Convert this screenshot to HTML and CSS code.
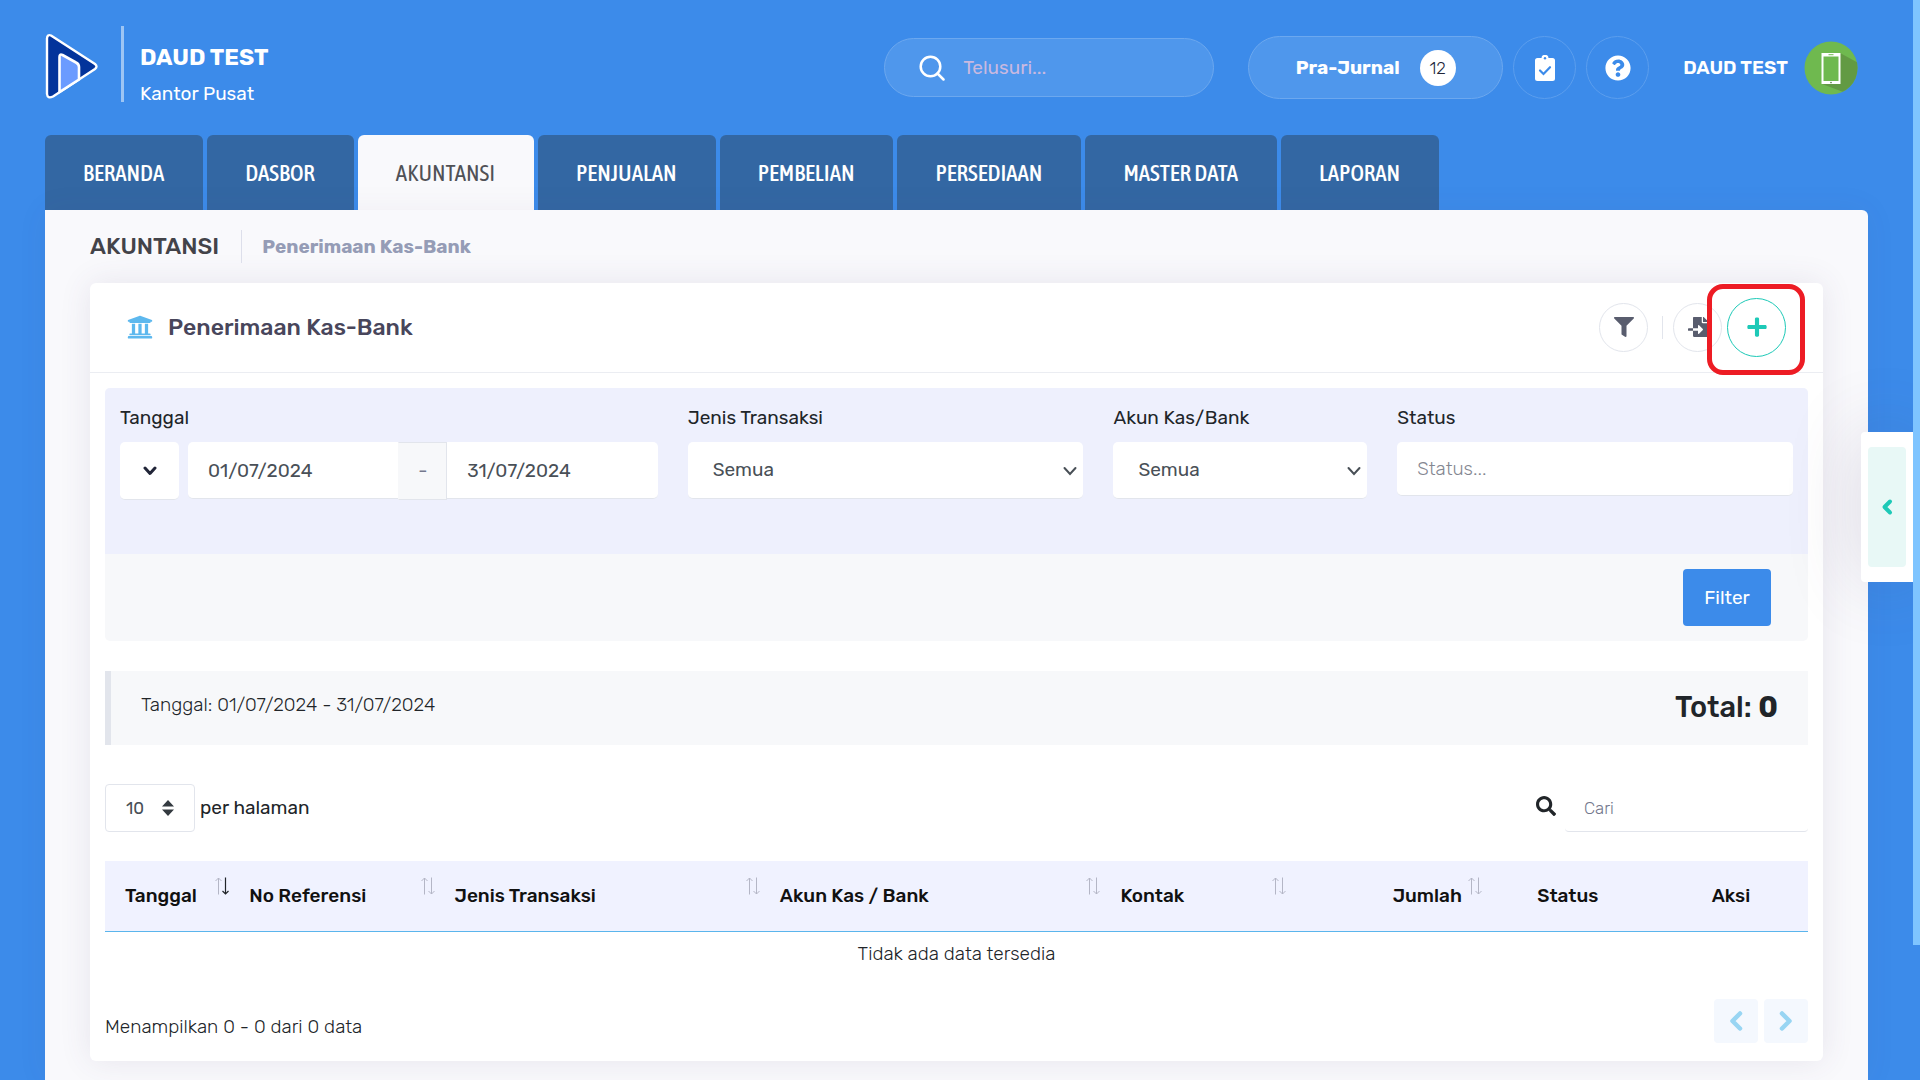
FILE: index.html
```html
<!DOCTYPE html>
<html lang="id">
<head>
<meta charset="utf-8">
<meta name="viewport" content="width=device-width, initial-scale=1">
<title>Penerimaan Kas-Bank</title>
<link rel="stylesheet" href="styles.css">
</head>
<body>
<header class="topbar">
  <a class="logo" href="#" aria-label="Beranda">
    <svg width="53" height="66" viewBox="0 0 53 66">
      <path d="M2 5.500Q2.300 1 6 2.500L50 31Q53 33.500 50 36L8 63.500Q2.500 66 2 61Z" fill="#03349b" stroke="#fff" stroke-width="2.400" stroke-linejoin="round"/>
      <path d="M14.500 59V24Q14.500 20.500 17.500 22L31 29.500Q34 31 34 34V46.500Z" fill="#6b9bff" stroke="#fff" stroke-width="2.600" stroke-linejoin="round"/>
    </svg>
  </a>
  <div class="company">
    <strong class="company-name">DAUD TEST</strong>
    <span class="company-branch">Kantor Pusat</span>
  </div>
  <label class="quick-search">
    <svg width="26" height="26" viewBox="0 0 26 26" fill="none" stroke="#fff" stroke-width="2.500" stroke-linecap="round"><circle cx="11.500" cy="11.500" r="9.800"/><path d="M18.500 18.500L24.500 24.500"/></svg>
    <input type="text" placeholder="Telusuri..." aria-label="Telusuri">
  </label>
  <button class="journal-pill" type="button">Pra-Jurnal <span class="count">12</span></button>
  <button class="round-button" type="button" aria-label="Tugas">
    <svg width="20" height="26" viewBox="0 0 20 26"><path d="M2.500 3H6.500A3.500 3.200 0 0 1 13.500 3H17.500Q20 3 20 5.500V23.500Q20 26 17.500 26H2.500Q0 26 0 23.500V5.500Q0 3 2.500 3Z" fill="#fff"/><circle cx="10" cy="3.300" r="1.200" fill="#3c8bea"/><path d="M5 15.500L8.500 19L15 12.200" fill="none" stroke="#3c8bea" stroke-width="2.200" stroke-linecap="round"/></svg>
  </button>
  <button class="round-button" type="button" aria-label="Bantuan">
    <svg width="26" height="26" viewBox="0 0 512 512" fill="#fff"><path d="M504 256c0 136.997-111.043 248-248 248S8 392.997 8 256C8 119.083 119.043 8 256 8s248 111.083 248 248zM262.655 90c-54.497 0-89.255 22.957-116.549 63.758-3.536 5.286-2.353 12.415 2.715 16.258l34.699 26.310c5.205 3.947 12.621 3.008 16.665-2.122 17.864-22.658 30.113-35.797 57.303-35.797 20.429 0 45.698 13.148 45.698 32.958 0 14.976-12.363 22.667-32.534 33.976C247.128 238.528 216 254.941 216 296v4c0 6.627 5.373 12 12 12h56c6.627 0 12-5.373 12-12v-1.333c0-28.462 83.186-29.647 83.186-106.667 0-58.002-60.165-102-116.531-102zM256 338c-25.365 0-46 20.635-46 46 0 25.364 20.635 46 46 46s46-20.636 46-46c0-25.365-20.635-46-46-46z"/></svg>
  </button>
  <a class="account" href="#">DAUD TEST
    <svg width="54" height="54" viewBox="0 0 54 54"><defs><clipPath id="avatar"><circle cx="27" cy="27" r="26.500"/></clipPath></defs><g clip-path="url(#avatar)"><path fill="#6fb94f" d="M0 0h54v54H0z"/><path d="M36 12L58 24V58L42 52L18 43Z" fill="#629a43"/></g><path d="M17.500 12h19v31h-19z" fill="#fff"/><path d="M19.500 15.500h15v24.500h-15z" fill="#6fb94f"/><path d="M24.500 13.200h5v1h-5z" fill="#6fb94f"/><circle cx="27" cy="41.600" r=".8" fill="#4d7d35"/></svg>
  </a>
</header>

<nav class="tabs">
  <a class="tab" href="#">BERANDA</a>
  <a class="tab" href="#">DASBOR</a>
  <a class="tab tab-active" href="#" aria-current="page">AKUNTANSI</a>
  <a class="tab" href="#">PENJUALAN</a>
  <a class="tab" href="#">PEMBELIAN</a>
  <a class="tab" href="#">PERSEDIAAN</a>
  <a class="tab" href="#">MASTER DATA</a>
  <a class="tab" href="#">LAPORAN</a>
</nav>

<main class="panel">
  <div class="subheader">
    <h1 class="section-name">AKUNTANSI</h1>
    <a class="crumb" href="#">Penerimaan Kas-Bank</a>
  </div>

  <section class="card">
    <header class="card-head">
      <svg width="26" height="26" viewBox="0 0 512 512" fill="#5db8ee"><path d="M496 128v16a8 8 0 0 1-8 8h-24v12c0 6.627-5.373 12-12 12H60c-6.627 0-12-5.373-12-12v-12H24a8 8 0 0 1-8-8v-16a8 8 0 0 1 4.941-7.392l232-88a7.996 7.996 0 0 1 6.118 0l232 88A8 8 0 0 1 496 128zm-24 304H40c-13.255 0-24 10.745-24 24v16a8 8 0 0 0 8 8h464a8 8 0 0 0 8-8v-16c0-13.255-10.745-24-24-24zM96 192v192H60c-6.627 0-12 5.373-12 12v20h416v-20c0-6.627-5.373-12-12-12h-36V192h-64v192h-64V192h-64v192h-64V192H96z"/></svg>
      <h2 class="card-title">Penerimaan Kas-Bank</h2>
      <div class="card-tools">
        <button class="tool" type="button" aria-label="Saring">
          <svg width="20" height="20" viewBox="0 0 512 512" fill="#595d6e"><path d="M487.976 0H24.028C2.710 0-8.047 25.866 7.058 40.971L192 225.941V432c0 7.831 3.821 15.170 10.237 19.662l80 55.980C298.020 518.690 320 507.493 320 487.980V225.941l184.947-184.970C520.021 25.896 509.338 0 487.976 0z"/></svg>
        </button>
        <span class="tool-divider"></span>
        <button class="tool" type="button" aria-label="Impor">
          <svg width="20" height="20" viewBox="0 0 512 512" fill="#595d6e"><path d="M16 288c-8.800 0-16 7.200-16 16v32c0 8.800 7.200 16 16 16h112v-64zm489-183L407.100 7c-4.500-4.500-10.600-7-17-7H384v128h128v-6.100c0-6.300-2.500-12.400-7-16.900zm-153 31V0H152c-13.300 0-24 10.700-24 24v264h128v-65.200c0-14.300 17.300-21.400 27.400-11.300L379 308c6.600 6.700 6.600 17.400 0 24l-95.700 96.400c-10.100 10.100-27.400 3-27.400-11.300V352H128v136c0 13.300 10.700 24 24 24h336c13.300 0 24-10.700 24-24V160H376c-13.200 0-24-10.800-24-24z"/></svg>
        </button>
        <div class="add-wrap">
          <button class="tool-add" type="button" aria-label="Tambah">
            <svg width="20" height="22" viewBox="0 0 448 512" fill="#1dc9b7"><path d="M416 208H272V64c0-17.670-14.330-32-32-32h-32c-17.670 0-32 14.330-32 32v144H32c-17.670 0-32 14.330-32 32v32c0 17.670 14.330 32 32 32h144v144c0 17.670 14.330 32 32 32h32c17.670 0 32-14.330 32-32V304h144c17.670 0 32-14.330 32-32v-32c0-17.670-14.330-32-32-32z"/></svg>
          </button>
          <span class="highlight"></span>
        </div>
      </div>
    </header>

    <div class="card-body">
      <form class="filter">
        <div class="filter-fields">
          <div class="field">
            <label for="date-from">Tanggal</label>
            <div class="date-row">
              <button class="date-preset" type="button" aria-label="Pilih periode">
                <svg width="14" height="10" viewBox="0 0 14 10" fill="none" stroke="#212538" stroke-width="3" stroke-linecap="round" stroke-linejoin="round"><path d="M2 2L7 7.500L12 2"/></svg>
              </button>
              <div class="date-group">
                <input class="control" id="date-from" type="text" value="01/07/2024">
                <span class="date-dash">-</span>
                <input class="control" type="text" value="31/07/2024" aria-label="Tanggal akhir">
              </div>
            </div>
          </div>
          <div class="field">
            <label for="kind">Jenis Transaksi</label>
            <div class="select">
              <select class="control" id="kind"><option>Semua</option></select>
              <svg width="14" height="10" viewBox="0 0 14 10" fill="none" stroke="#495057" stroke-width="2" stroke-linecap="round"><path d="M1.500 2L7 8L12.500 2"/></svg>
            </div>
          </div>
          <div class="field">
            <label for="account">Akun Kas/Bank</label>
            <div class="select">
              <select class="control" id="account"><option>Semua</option></select>
              <svg width="14" height="10" viewBox="0 0 14 10" fill="none" stroke="#495057" stroke-width="2" stroke-linecap="round"><path d="M1.500 2L7 8L12.500 2"/></svg>
            </div>
          </div>
          <div class="field">
            <label for="status">Status</label>
            <input class="control control-tags" id="status" type="text" placeholder="Status...">
          </div>
        </div>
        <div class="filter-foot">
          <button class="filter-submit" type="button">Filter</button>
        </div>
      </form>

      <div class="summary">
        <span class="summary-range">Tanggal: 01/07/2024 - 31/07/2024</span>
        <span class="summary-total">Total: <b>0</b></span>
      </div>

      <div class="table-tools">
        <label class="page-size">
          <span class="size-select">
            <select><option>10</option></select>
            <svg width="12" height="16" viewBox="0 0 12 16" fill="#343a40"><path d="M6 0L12 6.500H0ZM6 16L12 9.500H0Z"/></svg>
          </span>
          per halaman
        </label>
        <label class="table-search">
          <svg width="20" height="24" viewBox="0 0 512 614" fill="#212529"><path d="M505 442.700L405.300 343c-4.500-4.500-10.600-7-17-7H372c27.600-35.300 44-79.700 44-128C416 93.100 322.900 0 208 0S0 93.100 0 208s93.100 208 208 208c48.300 0 92.700-16.400 128-44v16.300c0 6.400 2.500 12.500 7 17l99.700 99.700c9.400 9.400 24.600 9.400 33.900 0l28.300-28.300c9.400-9.400 9.400-24.600.1-34zM208 336c-70.700 0-128-57.200-128-128 0-70.700 57.200-128 128-128 70.700 0 128 57.200 128 128 0 70.700-57.200 128-128 128z"/></svg>
          <input type="text" placeholder="Cari" aria-label="Cari">
        </label>
      </div>

      <table class="records">
        <colgroup><col class="c-date"><col class="c-ref"><col class="c-kind"><col class="c-account"><col class="c-contact"><col class="c-amount"><col class="c-status"><col></colgroup>
        <thead>
          <tr>
            <th>Tanggal<svg class="sort" width="15" height="18" viewBox="0 0 15 18"><g fill="none" stroke="#b4b6c6"><path d="M4.500 17.500V1M1.500 4L4.500 1L7.500 4"/><path stroke="#212529" stroke-width="1.200" d="M11.500 .5V17M8.500 14L11.500 17L14.500 14"/></g></svg></th>
            <th>No Referensi<svg class="sort" width="15" height="18" viewBox="0 0 15 18"><path fill="none" stroke="#b4b6c6" d="M4.500 17.500V1M1.500 4L4.500 1L7.500 4M11.500 .5V17M8.500 14L11.500 17L14.500 14"/></svg></th>
            <th>Jenis Transaksi<svg class="sort" width="15" height="18" viewBox="0 0 15 18"><path fill="none" stroke="#b4b6c6" d="M4.500 17.500V1M1.500 4L4.500 1L7.500 4M11.500 .5V17M8.500 14L11.500 17L14.500 14"/></svg></th>
            <th>Akun Kas / Bank<svg class="sort" width="15" height="18" viewBox="0 0 15 18"><path fill="none" stroke="#b4b6c6" d="M4.500 17.500V1M1.500 4L4.500 1L7.500 4M11.500 .5V17M8.500 14L11.500 17L14.500 14"/></svg></th>
            <th>Kontak<svg class="sort" width="15" height="18" viewBox="0 0 15 18"><path fill="none" stroke="#b4b6c6" d="M4.500 17.500V1M1.500 4L4.500 1L7.500 4M11.500 .5V17M8.500 14L11.500 17L14.500 14"/></svg></th>
            <th class="right">Jumlah<svg class="sort" width="15" height="18" viewBox="0 0 15 18"><path fill="none" stroke="#b4b6c6" d="M4.500 17.500V1M1.500 4L4.500 1L7.500 4M11.500 .5V17M8.500 14L11.500 17L14.500 14"/></svg></th>
            <th class="center">Status</th>
            <th class="center">Aksi</th>
          </tr>
        </thead>
        <tbody>
          <tr><td colspan="8">Tidak ada data tersedia</td></tr>
        </tbody>
      </table>

      <div class="table-foot">
        <span class="table-info">Menampilkan 0 - 0 dari 0 data</span>
        <div class="pager">
          <button type="button" aria-label="Sebelumnya" disabled><svg width="16" height="22" viewBox="0 0 16 22" fill="none" stroke="#98d5f3" stroke-width="4.500" stroke-linecap="round" stroke-linejoin="round"><path d="M12 3.500L4.500 11L12 18.500"/></svg></button>
          <button type="button" aria-label="Berikutnya" disabled><svg width="16" height="22" viewBox="0 0 16 22" fill="none" stroke="#98d5f3" stroke-width="4.500" stroke-linecap="round" stroke-linejoin="round"><path d="M4 3.500L11.500 11L4 18.500"/></svg></button>
        </div>
      </div>
    </div>
  </section>
</main>

<aside class="drawer">
  <button class="drawer-toggle" type="button" aria-label="Buka panel">
    <svg width="12" height="18" viewBox="0 0 12 18" fill="none" stroke="#1dc9b7" stroke-width="4" stroke-linecap="round" stroke-linejoin="round"><path d="M9 3.500L3.500 9L9 14.500"/></svg>
  </button>
</aside>
<div class="scroll-thumb"></div>
</body>
</html>
```

FILE: styles.css
```css
* {
  box-sizing: border-box;
}

body {
  margin: 0;
  padding: 0 52px 0 45px;
  min-height: 100vh;
  display: flex;
  flex-direction: column;
  background: #3c8bea;
  color: #212529;
  font-family: Rubik, Roboto, sans-serif;
  font-size: 19px;
  line-height: 28px;
}

button,
input,
select {
  margin: 0;
  padding: 0;
  border: 0;
  background: none;
  font: inherit;
  color: inherit;
  outline: 0;
}

select {
  appearance: none;
}

a {
  color: inherit;
  text-decoration: none;
}

svg {
  display: block;
  flex: none;
}

h1,
h2 {
  margin: 0;
  font-size: 23px;
  font-weight: 500;
}

/* Top bar */
.topbar {
  display: flex;
  align-items: center;
  height: 135px;
  padding-right: 10px;
  color: #fff;
}

.logo {
  padding: 0 23px 4px 0;
}

.company {
  display: flex;
  flex-direction: column;
  gap: 9px;
  height: 76px;
  margin-bottom: 8px;
  padding: 17px 0 0 16px;
  border-left: 3px solid #9dc5f4;
}

.company-name {
  font-size: 23px;
  font-weight: 700;
}

.company-branch {
  font-size: 19px;
}

.quick-search {
  display: flex;
  align-items: center;
  gap: 18px;
  width: 330px;
  height: 59px;
  margin: 0 34px 0 auto;
  padding: 0 34px;
  border: 1px solid #6ca8ef;
  border-radius: 30px;
  background: #4f97ec;
}

.quick-search input {
  width: 100%;
  min-width: 0;
}

.quick-search input::placeholder {
  color: #c9b9e0;
  opacity: 1;
}

.journal-pill {
  display: flex;
  align-items: center;
  justify-content: center;
  gap: 20px;
  width: 255px;
  height: 63px;
  margin-right: 10px;
  border: 1px solid #6ca8ef;
  border-radius: 32px;
  background: #4f97ec;
  font-weight: 700;
  white-space: nowrap;
}

.count {
  display: grid;
  place-items: center;
  width: 36px;
  height: 36px;
  border-radius: 50%;
  background: #fff;
  color: #212538;
  font-size: 17px;
  font-weight: 300;
}

.round-button {
  display: grid;
  place-items: center;
  width: 63px;
  height: 63px;
  margin-right: 10px;
  border: 1px solid #5b9eee;
  border-radius: 50%;
}

.account {
  display: flex;
  align-items: center;
  gap: 16px;
  margin-left: 24px;
  font-weight: 600;
}

/* Main navigation */
.tabs {
  display: flex;
  gap: 4px;
}

.tab {
  padding: 2px 39px 0 38px;
  border-radius: 6px 6px 0 0;
  background: #3367a3;
  color: #fff;
  font-family: "Asap Condensed", "Roboto Condensed", Rubik, sans-serif;
  font-size: 23px;
  font-weight: 500;
  line-height: 73px;
}

.tab-active {
  background: #f9f9fc;
  color: #505156;
  font-weight: 400;
}

/* Content panel */
.panel {
  flex: 1;
  padding: 0 45px 18px;
  border-radius: 0 6px 0 0;
  background: #f9f9fc;
  box-shadow: 0 0 32px rgba(82, 63, 105, 0.06);
}

.subheader {
  display: flex;
  align-items: center;
  height: 73px;
}

.section-name {
  padding-right: 22px;
  border-right: 1px solid #dddfeb;
  color: #434349;
  line-height: 33px;
}

.crumb {
  padding-left: 20px;
  color: #959cb6;
  font-weight: 700;
}

.card {
  border-radius: 6px;
  background: #fff;
  box-shadow: 0 0 32px rgba(82, 63, 105, 0.11);
}

.card-head {
  display: flex;
  align-items: center;
  gap: 15px;
  height: 90px;
  padding: 0 37px 1px;
  border-bottom: 1px solid #ebedf2;
}

.card-title {
  color: #48465b;
}

.card-tools {
  display: flex;
  align-items: center;
  margin-left: auto;
}

.tool,
.tool-add {
  display: grid;
  place-items: center;
  width: 49px;
  height: 49px;
  border: 1px solid #e2e5ec;
  border-radius: 50%;
}

.tool-divider {
  width: 1px;
  height: 23px;
  margin: 0 10px 0 14px;
  background: #e2e5ec;
}

.add-wrap {
  position: relative;
  margin-left: 5px;
}

.tool-add {
  width: 59px;
  height: 59px;
  border-color: #1dc9b7;
}

.highlight {
  position: absolute;
  inset: -14px -19px -18px -20px;
  border: 5px solid #ed1c24;
  border-radius: 16px;
  pointer-events: none;
}

.card-body {
  padding: 15px 15px 18px;
}

/* Filter */
.filter {
  overflow: hidden;
  border-radius: 5px;
  background: #f7f8fa;
}

.filter-fields {
  display: grid;
  grid-template-columns: 4fr 3fr 2fr 3fr;
  padding: 16px 0 54px;
  background: #eef0fd;
}

.field {
  display: flex;
  flex-direction: column;
  gap: 10px;
  min-width: 0;
  padding: 0 15px;
}

.date-row {
  display: flex;
  align-items: flex-start;
  gap: 9px;
}

.date-preset {
  display: grid;
  place-items: center;
  flex: none;
  width: 59px;
  height: 58px;
  border-bottom: 1px solid #e2e5ec;
  border-radius: 5px;
  background: #fff;
}

.date-group {
  display: flex;
  flex: 1;
  min-width: 0;
}

.date-group .control:first-child {
  border-radius: 5px 0 0 5px;
}

.date-group .control:last-child {
  border-radius: 0 5px 5px 0;
}

.date-dash {
  display: grid;
  place-items: center;
  flex: none;
  width: 49px;
  height: 58px;
  border: 1px solid #e2e5ec;
  border-left-color: #f7f8fa;
  background: #f7f8fa;
  color: #74788d;
}

.control {
  width: 100%;
  min-width: 0;
  height: 57px;
  padding: 0 20px;
  border-bottom: 1px solid #e2e5ec;
  border-radius: 5px;
  background: #fff;
  color: #495057;
}

.control-tags {
  height: 54px;
}

.control-tags::placeholder {
  color: #848791;
  font-weight: 300;
  opacity: 1;
}

.select,
.size-select {
  display: grid;
  align-items: center;
}

.select > *,
.size-select > * {
  grid-area: 1 / 1;
}

.select .control {
  padding-left: 25px;
}

.select svg {
  justify-self: end;
  margin-right: 6px;
  pointer-events: none;
}

.filter-foot {
  display: flex;
  justify-content: flex-end;
  padding: 15px 37px;
}

.filter-submit {
  width: 88px;
  height: 57px;
  border-radius: 4px;
  background: #3c8bea;
  color: #fff;
}

/* Summary */
.summary {
  display: flex;
  justify-content: space-between;
  height: 74px;
  margin-top: 30px;
  padding: 20px 30px;
  border-left: 6px solid #e2e5ec;
  background: #f7f8fa;
}

.summary-range {
  font-weight: 300;
}

.summary-total {
  font-size: 29px;
  font-weight: 500;
  line-height: 32px;
}

/* Table */
.table-tools {
  display: flex;
  align-items: center;
  justify-content: space-between;
  margin: 39px 0 29px;
}

.page-size {
  display: flex;
  align-items: center;
  gap: 5px;
}

.size-select {
  width: 90px;
}

.size-select select {
  height: 48px;
  padding-left: 20px;
  border: 1px solid #e2e5ec;
  border-radius: 4px;
  color: #495057;
  font-size: 17px;
}

.size-select svg {
  justify-self: end;
  margin-right: 21px;
  pointer-events: none;
}

.table-search {
  display: flex;
  align-items: center;
  gap: 9px;
}

.table-search input {
  width: 243px;
  height: 48px;
  padding: 0 19px;
  border-bottom: 1px solid #e2e5ec;
  border-radius: 4px;
  font-size: 17px;
}

.table-search input::placeholder {
  color: #74788d;
  font-weight: 300;
  opacity: 1;
}

.records {
  width: 100%;
  table-layout: fixed;
  border-collapse: collapse;
}

.c-date { width: 7.3%; }
.c-ref { width: 12.05%; }
.c-kind { width: 19.1%; }
.c-account { width: 20%; }
.c-contact { width: 10.9%; }
.c-amount { width: 11.5%; }
.c-status { width: 10.1%; }

.records th {
  position: relative;
  height: 70px;
  padding: 0 20px;
  border-bottom: 1px solid #5bb5ec;
  background: #f0f2ff;
  color: #111;
  font-weight: 500;
  text-align: left;
  white-space: nowrap;
}

.records .right {
  text-align: right;
}

.records .center {
  text-align: center;
}

.sort {
  position: absolute;
  top: 16px;
  right: 0;
}

.records td {
  height: 46px;
  padding: 0;
  font-weight: 300;
  text-align: center;
}

.table-foot {
  display: flex;
  align-items: flex-end;
  justify-content: space-between;
  margin-top: 22px;
}

.table-info {
  padding-bottom: 2px;
  font-weight: 300;
}

.pager {
  display: flex;
  gap: 6px;
}

.pager button {
  display: grid;
  place-items: center;
  width: 44px;
  height: 44px;
  border-radius: 4px;
  background: #f4f8fe;
}

/* Side drawer handle */
.drawer {
  position: fixed;
  top: 432px;
  right: 7px;
  padding: 15px 7px;
  border-radius: 4px 0 0 4px;
  background: #fff;
  box-shadow: 0 0 75px rgba(82, 63, 105, 0.2);
}

.drawer-toggle {
  display: grid;
  place-items: center;
  width: 38px;
  height: 120px;
  border-radius: 4px;
  background: #e8f8f6;
}

.scroll-thumb {
  position: fixed;
  top: 0;
  right: 0;
  width: 7px;
  height: 87.5%;
  background: #7ec4ff;
}
```
